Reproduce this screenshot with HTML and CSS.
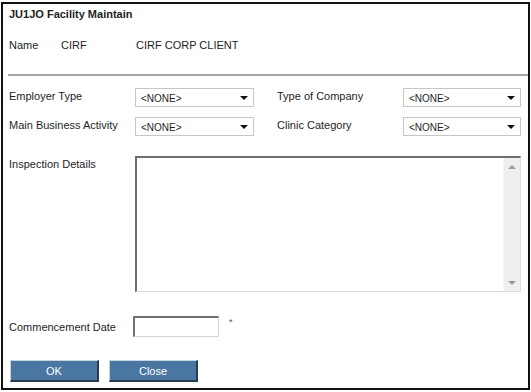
FILE: index.html
```html
<!DOCTYPE html>
<html lang="en">
<head>
<meta charset="UTF-8">
<meta name="viewport" content="width=device-width, initial-scale=1.0">
<title>JU1JO Facility Maintain</title>
<link rel="stylesheet" href="styles.css">
</head>
<body>
<div class="dialog">
  <div class="title">JU1JO Facility Maintain</div>

  <div class="name-row">
    <span class="name-label">Name</span>
    <span class="name-code">CIRF</span>
    <span class="name-desc">CIRF CORP CLIENT</span>
  </div>

  <div class="divider"></div>

  <div class="fields">
    <label>Employer Type</label>
    <div class="select"><span>&lt;NONE&gt;</span><i class="arrow"></i></div>
    <span></span>
    <label>Type of Company</label>
    <div class="select"><span>&lt;NONE&gt;</span><i class="arrow"></i></div>

    <label>Main Business Activity</label>
    <div class="select"><span>&lt;NONE&gt;</span><i class="arrow"></i></div>
    <span></span>
    <label>Clinic Category</label>
    <div class="select"><span>&lt;NONE&gt;</span><i class="arrow"></i></div>
  </div>

  <div class="memo-row">
    <label>Inspection Details</label>
    <div class="memo">
      <div class="memo-text"></div>
      <div class="scrollbar">
        <i class="sb-up"></i>
        <i class="sb-down"></i>
      </div>
    </div>
  </div>

  <div class="date-row">
    <label>Commencement Date</label>
    <div class="date-input"></div>
    <span class="req">*</span>
  </div>

  <div class="buttons">
    <button>OK</button>
    <button>Close</button>
  </div>
</div>
</body>
</html>
```

FILE: styles.css
```css
body {
  margin: 0;
  font-family: "Liberation Sans", Arial, sans-serif;
  font-size: 11px;
  color: #1e1e1e;
  background: #fff;
}
.dialog {
  box-sizing: border-box;
  width: 529px;
  height: 388px;
  margin: 2px 0 0 1px;
  border: 2px solid #111;
  padding-top: 3px;
  display: flex;
  flex-direction: column;
}
.title {
  font-weight: bold;
  line-height: 14px;
  padding-left: 6px;
}
.name-row {
  display: flex;
  line-height: 14px;
  margin-top: 17px;
  padding-left: 6px;
}
.name-label {
  width: 52px;
}
.name-code {
  width: 75px;
}
.divider {
  height: 2px;
  background: #a2a2a2;
  margin: 22px 0 0 5px;
}
.fields {
  display: grid;
  grid-template-columns: 126px 119px 23px 126px 118px;
  row-gap: 10px;
  margin-top: 12px;
  padding-left: 6px;
}
label {
  line-height: 14px;
  padding-top: 1px;
}
.select {
  box-sizing: border-box;
  height: 19px;
  border: 1px solid #c6c6c6;
  display: flex;
  align-items: center;
  justify-content: space-between;
  padding: 1px 5px 0 5px;
  font-size: 10px;
}
.arrow {
  width: 0;
  height: 0;
  border-left: 4px solid transparent;
  border-right: 4px solid transparent;
  border-top: 4px solid #111;
}
.memo-row {
  display: flex;
  margin-top: 20px;
  padding-left: 6px;
}
.memo-row label {
  width: 126px;
}
.memo {
  box-sizing: border-box;
  width: 386px;
  height: 136px;
  border-top: 2px solid #6e6e6e;
  border-left: 2px solid #6e6e6e;
  border-right: 1px solid #dcdcdc;
  border-bottom: 1px solid #dcdcdc;
  display: flex;
}
.memo-text {
  flex: 1;
}
.scrollbar {
  width: 16px;
  background: #efefef;
  border-left: 1px solid #f7f7f7;
  display: flex;
  flex-direction: column;
  justify-content: space-between;
  align-items: center;
  padding: 7px 0 6px;
}
.sb-up {
  border-left: 4px solid transparent;
  border-right: 4px solid transparent;
  border-bottom: 4px solid #9a9a9a;
}
.sb-down {
  border-left: 4px solid transparent;
  border-right: 4px solid transparent;
  border-top: 4px solid #9a9a9a;
}
.date-row {
  display: flex;
  align-items: flex-start;
  margin-top: 24px;
  padding-left: 6px;
}
.date-row label {
  width: 124px;
  padding-top: 4px;
}
.date-input {
  box-sizing: border-box;
  width: 86px;
  height: 21px;
  border-top: 2px solid #707070;
  border-left: 2px solid #707070;
  border-right: 1px solid #d6d6d6;
  border-bottom: 1px solid #d6d6d6;
}
.req {
  margin: 2px 0 0 10px;
  font-size: 9px;
  color: #555;
  line-height: 9px;
}
.buttons {
  display: flex;
  gap: 10px;
  margin-top: 23px;
  padding-left: 7px;
}
button {
  box-sizing: border-box;
  width: 89px;
  height: 22px;
  background: #4a76a2;
  color: #fff;
  font-family: "Liberation Sans", Arial, sans-serif;
  font-size: 11px;
  border-top: 1px solid #c8d4e0;
  border-left: 1px solid #c8d4e0;
  border-right: 2px solid #2a3c52;
  border-bottom: 2px solid #2a3c52;
  padding: 0;
}
```
